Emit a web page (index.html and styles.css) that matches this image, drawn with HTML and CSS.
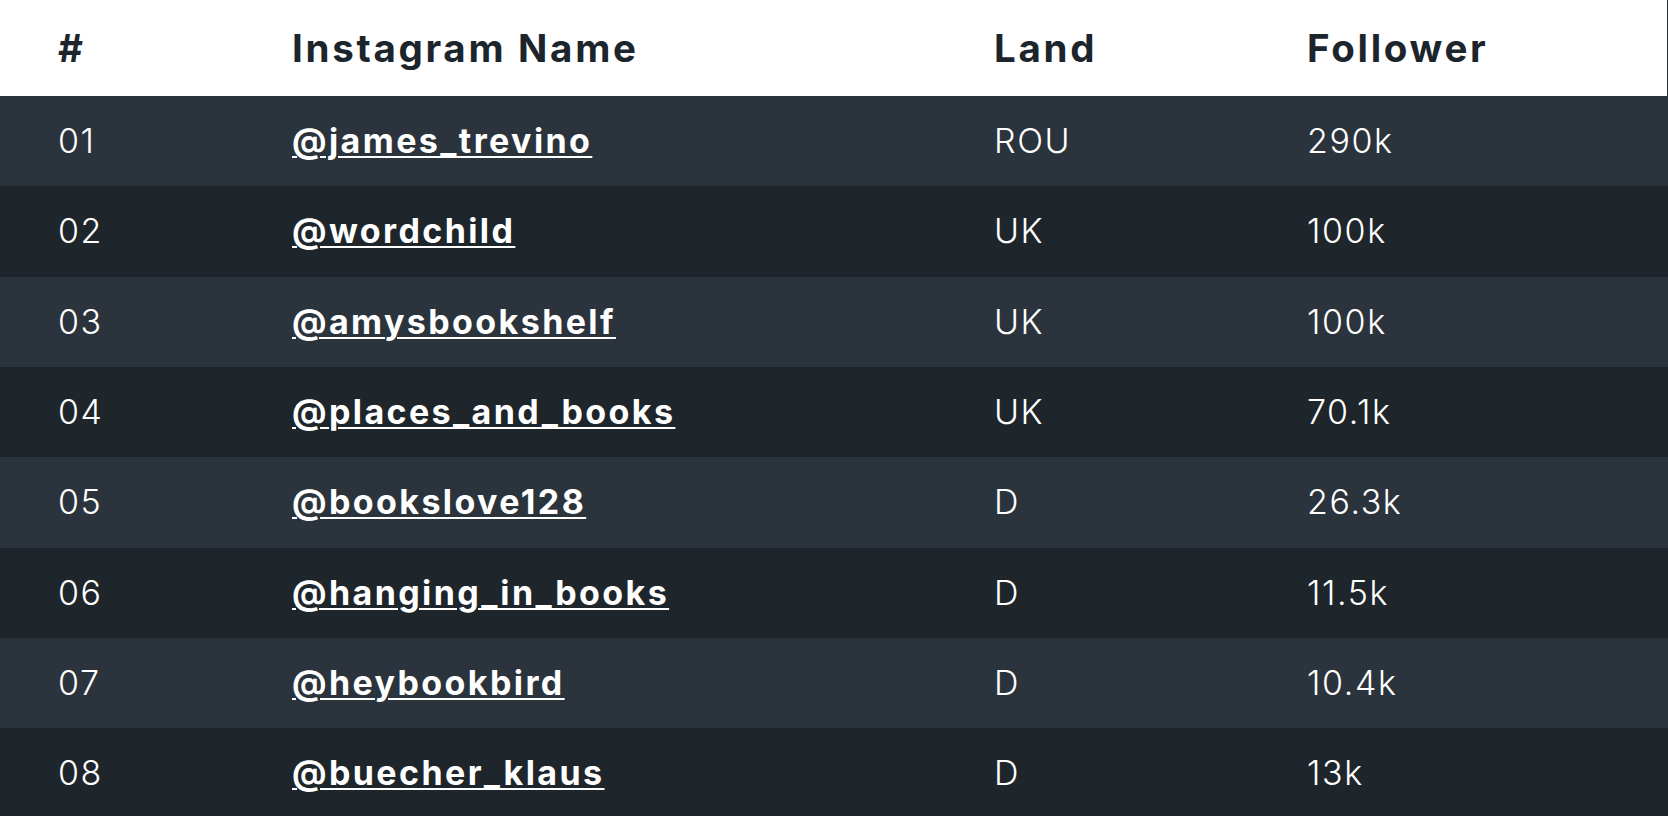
FILE: index.html
```html
<!DOCTYPE html>
<html lang="de">
<head>
<meta charset="utf-8">
<title>Instagram</title>
<link rel="stylesheet" href="styles.css">
</head>
<body>
<div class="table">
  <div class="row head">
    <div class="cell">#</div>
    <div class="cell">Instagram Name</div>
    <div class="cell">Land</div>
    <div class="cell">Follower</div>
  </div>
  <div class="row odd">
    <div class="cell num">01</div>
    <div class="cell"><a href="#">@james_trevino</a></div>
    <div class="cell">ROU</div>
    <div class="cell">290k</div>
  </div>
  <div class="row even">
    <div class="cell num">02</div>
    <div class="cell"><a href="#">@wordchild</a></div>
    <div class="cell">UK</div>
    <div class="cell">100k</div>
  </div>
  <div class="row odd">
    <div class="cell num">03</div>
    <div class="cell"><a href="#">@amysbookshelf</a></div>
    <div class="cell">UK</div>
    <div class="cell">100k</div>
  </div>
  <div class="row even">
    <div class="cell num">04</div>
    <div class="cell"><a href="#">@places_and_books</a></div>
    <div class="cell">UK</div>
    <div class="cell">70.1k</div>
  </div>
  <div class="row odd">
    <div class="cell num">05</div>
    <div class="cell"><a href="#">@bookslove128</a></div>
    <div class="cell">D</div>
    <div class="cell">26.3k</div>
  </div>
  <div class="row even">
    <div class="cell num">06</div>
    <div class="cell"><a href="#">@hanging_in_books</a></div>
    <div class="cell">D</div>
    <div class="cell">11.5k</div>
  </div>
  <div class="row odd">
    <div class="cell num">07</div>
    <div class="cell"><a href="#">@heybookbird</a></div>
    <div class="cell">D</div>
    <div class="cell">10.4k</div>
  </div>
  <div class="row even">
    <div class="cell num">08</div>
    <div class="cell"><a href="#">@buecher_klaus</a></div>
    <div class="cell">D</div>
    <div class="cell">13k</div>
  </div>
</div>
</body>
</html>
```

FILE: styles.css
```css
html, body {
  margin: 0;
  padding: 0;
  background: #1e262c;
}
body {
  font-family: Inter, "Liberation Sans", sans-serif;
  overflow: hidden;
}
.table {
  display: flex;
  flex-direction: column;
}
.row {
  display: grid;
  grid-template-columns: 234px 702px 313px 1fr;
  align-items: center;
  padding-left: 58px;
  height: 90.33px;
  color: #ffffff;
  font-size: 34px;
  font-weight: 300;
  letter-spacing: 1.6px;
}
.row.head {
  height: 96px;
  background: #ffffff;
  color: #1d252c;
  font-size: 38.5px;
  font-weight: 700;
  letter-spacing: 2.7px;
  border-right: 1px solid #2b343c;
}
.row.odd {
  background: #2b343c;
}
.row.even {
  background: #1e262c;
}
.cell {
  white-space: nowrap;
  line-height: 1;
}
.cell a {
  color: #ffffff;
  font-weight: 700;
  letter-spacing: 2.4px;
  text-decoration: underline;
  text-decoration-thickness: 2px;
  text-underline-offset: 3px;
}
```
